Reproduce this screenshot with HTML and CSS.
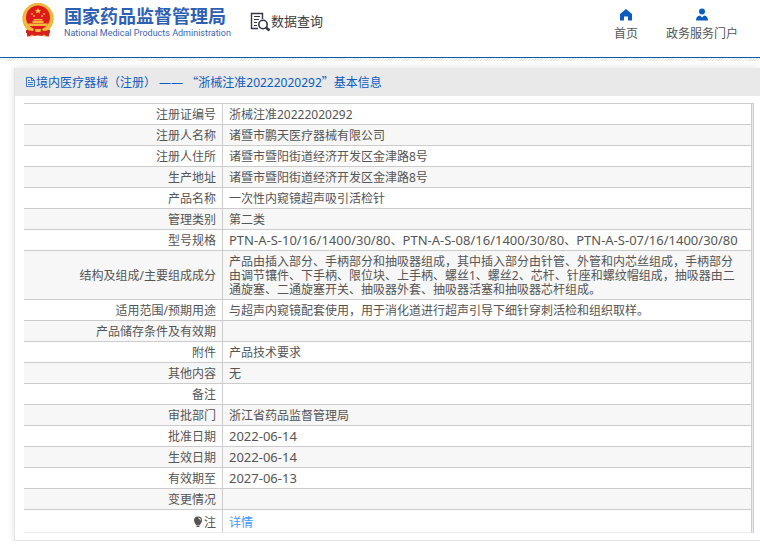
FILE: index.html
```html
<!DOCTYPE html>
<html lang="zh-CN">
<head>
<meta charset="utf-8">
<title>国家药品监督管理局 数据查询</title>
<link rel="stylesheet" href="styles.css">
</head>
<body>
<header class="top">
  <a class="brand" href="#">
    <svg class="emblem" viewBox="0 0 34 36" aria-hidden="true">
      <path d="M6 25L6 34.500 17 33.500 28 34.500 28 25Z" fill="#d8201c"/>
      <circle cx="17" cy="16.500" r="15.500" fill="#f3bd3c"/>
      <circle cx="17" cy="16.500" r="15" fill="none" stroke="#e8a52c" stroke-width="1" stroke-dasharray="2 1"/>
      <circle cx="17" cy="15.500" r="12" fill="#de1a1c"/>
      <path d="M17 6l.9 2h2.200l-1.700 1.400.6 2.100-2-1.300-2 1.300.6-2.100-1.700-1.400h2.200z" fill="#f8cf45"/>
      <g fill="#f3b93c"><circle cx="11" cy="12" r=".9"/><circle cx="23" cy="12" r=".9"/><circle cx="13" cy="14" r=".9"/><circle cx="21" cy="14" r=".9"/>
      <path d="M13 17h8l1 1.500h-10zM11.500 19h11v2h-11zM7 21.500h20l-1 2.500H8z"/></g>
      <path d="M5 28l7 1 1-2h8l1 2 7-1v3l-7 .5-2 1.500h-6l-2-1.500-7-.5z" fill="#d8201c"/>
      <path d="M14 27h6l-.5 3h-5zM8 34.500l3-2 2 1.500M26 34.500l-3-2-2 1.500" fill="#f0b83c"/>
    </svg>
    <span class="brand-text">
      <span class="brand-cn">国家药品监督管理局</span>
      <span class="brand-en">National Medical Products Administration</span>
    </span>
  </a>
  <a class="query" href="#">
    <svg class="query-icon" viewBox="0 0 21 20" fill="none" stroke="#34344a" aria-hidden="true">
      <path d="M8 16.500H1.500V1.500H12.500V7" stroke-width="1.400"/>
      <path d="M4 4.500h6M4 7.500h5M4 10.500h3M4 13.500h3" stroke-width="1"/>
      <circle cx="13" cy="12.500" r="4.200" stroke-width="1.600"/>
      <path d="M16 15.500L19.500 18.500" stroke-width="2.600"/>
    </svg>
    <span>数据查询</span>
  </a>
  <nav class="nav">
    <a href="#">
      <svg viewBox="0 0 14 13" aria-hidden="true"><path d="M7 1L13 6v6.500H9V8.500H5v4H1V6z" fill="#0a5cc0"/></svg>
      <span>首页</span>
    </a>
    <a href="#">
      <svg viewBox="0 0 14 13" aria-hidden="true"><circle cx="7" cy="3.500" r="3" fill="#0a5cc0"/><path d="M1 12.500Q1 8 5 7.500L7 9.500 9 7.500Q13 8 13 12.500z" fill="#0a5cc0"/></svg>
      <span>政务服务门户</span>
    </a>
  </nav>
</header>
<div class="hatch"></div>
<main class="panel">
  <h1 class="panel-title">
    <svg viewBox="0 0 12 12" fill="none" stroke="#0a5cc0" stroke-width=".8" aria-hidden="true"><path d="M2.500 1.500h5l3 3v6h-8zM7.500 1.500v3h3M4 6.500h5M4 8.500h5M4 4.500h2"/></svg>
    <span>境内医疗器械（注册） —— <span class="wide">“</span>浙械注准20222020292<span class="wide">”</span>基本信息</span>
  </h1>
  <div class="panel-body">
    <table class="info">
      <tr><th scope="row">注册证编号</th><td>浙械注准20222020292</td></tr>
      <tr><th scope="row">注册人名称</th><td>诸暨市鹏天医疗器械有限公司</td></tr>
      <tr><th scope="row">注册人住所</th><td>诸暨市暨阳街道经济开发区金津路8号</td></tr>
      <tr><th scope="row">生产地址</th><td>诸暨市暨阳街道经济开发区金津路8号</td></tr>
      <tr><th scope="row">产品名称</th><td>一次性内窥镜超声吸引活检针</td></tr>
      <tr><th scope="row">管理类别</th><td>第二类</td></tr>
      <tr><th scope="row">型号规格</th><td><span class="code">PTN-A-S-10/16/1400/30/80</span>、<span class="code">PTN-A-S-08/16/1400/30/80</span>、<span class="code">PTN-A-S-07/16/1400/30/80</span></td></tr>
      <tr><th scope="row">结构及组成/主要组成成分</th><td>产品由插入部分、手柄部分和抽吸器组成，其中插入部分由针管、外管和内芯丝组成，手柄部分由调节镶件、下手柄、限位块、上手柄、螺丝1、螺丝2、芯杆、针座和螺纹帽组成，抽吸器由二通旋塞、二通旋塞开关、抽吸器外套、抽吸器活塞和抽吸器芯杆组成。</td></tr>
      <tr><th scope="row">适用范围/预期用途</th><td>与超声内窥镜配套使用，用于消化道进行超声引导下细针穿刺活检和组织取样。</td></tr>
      <tr><th scope="row">产品储存条件及有效期</th><td></td></tr>
      <tr><th scope="row">附件</th><td>产品技术要求</td></tr>
      <tr><th scope="row">其他内容</th><td>无</td></tr>
      <tr><th scope="row">备注</th><td></td></tr>
      <tr><th scope="row">审批部门</th><td>浙江省药品监督管理局</td></tr>
      <tr><th scope="row">批准日期</th><td><span class="code">2022-06-14</span></td></tr>
      <tr><th scope="row">生效日期</th><td><span class="code">2022-06-14</span></td></tr>
      <tr><th scope="row">有效期至</th><td><span class="code">2027-06-13</span></td></tr>
      <tr><th scope="row">变更情况</th><td></td></tr>
      <tr class="note"><th scope="row"><svg viewBox="0 0 10 12" aria-hidden="true"><path d="M5 0.500a4 4 0 0 1 4 4C9 6.500 7.500 7.500 7 9H3C2.500 7.500 1 6.500 1 4.500a4 4 0 0 1 4-4zM3.500 9.500h3v1.500h-3z" fill="#555"/><path d="M5.500 2q2 .3 2 2.300" stroke="#fff" fill="none"/></svg>注</th><td><a href="#">详情</a></td></tr>
    </table>
  </div>
</main>
</body>
</html>
```
FILE: styles.css
```css
* { box-sizing: border-box; }
body {
  margin: 0;
  background: #fff;
  color: #555;
  font: 12px/14px "Noto Sans", "Noto Sans CJK SC", sans-serif;
}
a { color: inherit; text-decoration: none; }
svg { display: block; }
.top {
  display: flex;
  align-items: flex-start;
  height: 58px;
  padding: 2px 22px 0 21px;
  border-bottom: 1px solid #0a5cab;
}
.brand { display: flex; gap: 9px; }
.emblem { width: 34px; height: 36px; }
.brand-text { display: flex; flex-direction: column; padding-top: 4px; white-space: nowrap; }
.brand-cn {
  color: #2f5fb3;
  font-size: 18px;
  line-height: 20px;
  font-weight: 700;
}
.brand-en {
  color: #3a66b5;
  font: 400 9px/14px Roboto, "Liberation Sans", sans-serif;
}
.query {
  display: flex;
  margin-left: 19px;
  padding-top: 10px;
  color: #3c3c3c;
  font-size: 13px;
  line-height: 18px;
}
.query-icon { width: 21px; height: 20px; }
.nav { display: flex; gap: 28px; margin-left: auto; padding-top: 6px; }
.nav a { display: flex; flex-direction: column; align-items: center; gap: 5px; line-height: 16px; }
.nav svg { width: 14px; height: 13px; }
.hatch {
  height: 3px;
  margin-bottom: 7px;
  background: repeating-linear-gradient(135deg, #fff 0 1px, #e6e9e0 1px 2px);
}
.panel {
  margin-left: 14px;
  border: 1px solid #e4e4e4;
  border-width: 0 0 1px 1px;
  box-shadow: 0 0 8px rgba(0, 0, 0, 0.12);
  background: #fff;
}
.panel-title {
  display: flex;
  align-items: center;
  height: 28px;
  margin: 0;
  padding: 0 0 0 9px;
  background: #e9e9e9;
  color: #0a5cc0;
  font-size: 12px;
  font-weight: 400;
}
.panel-title svg { width: 12px; height: 12px; }
.wide { font-family: "Noto Sans CJK SC", sans-serif; }
.panel-body { padding: 7px 6px 7px 9px; }
.info {
  width: 100%;
  border-collapse: separate;
  border-spacing: 0;
  border-top: 1px solid #ccc;
  border-right: 1px solid #ccccd2;
  padding-right: 1px;
  background: #ebebf5;
}
.info th, .info td {
  height: 21px;
  padding: 4px 12px 2px 6px;
  border-right: 1px solid #ccc;
  border-bottom: 1px solid #ccc;
  background: #fff;
  font-weight: 400;
  text-align: left;
}
.info th { width: 199px; padding-right: 6px; text-align: right; }
.info tr:nth-child(even) > * { background: #f7f7f7; }
.info .note > * { height: 23px; padding-top: 6px; border-bottom-color: #ebebf5; }
.code { font-size: 13px; line-height: 12px; }
.note svg { display: inline-block; width: 10px; height: 12px; margin-right: 1px; vertical-align: -1px; }
.note a { color: #3c96ff; }
```
